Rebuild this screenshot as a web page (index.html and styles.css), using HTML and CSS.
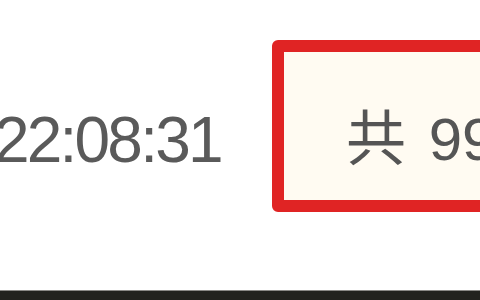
FILE: index.html
```html
<!DOCTYPE html>
<html lang="zh-CN">
<head>
<meta charset="utf-8">
<title>订单</title>
<link rel="stylesheet" href="styles.css">
</head>
<body>
<div class="page">
  <div class="main">
    <div class="time">22:08:31</div>
    <div class="total">共 99</div>
  </div>
  <div class="footer"></div>
</div>
</body>
</html>
```
FILE: styles.css
```css
html, body {
  margin: 0;
  padding: 0;
  background: #ffffff;
}
.page {
  width: 480px;
  height: 300px;
  display: flex;
  flex-direction: column;
  overflow: hidden;
}
.main {
  flex: 1;
  display: flex;
  align-items: flex-start;
  overflow: hidden;
}
.time {
  flex: none;
  width: 272px;
  margin-left: -6px;
  padding-top: 108px;
  font-family: "Liberation Sans", "Noto Sans CJK SC", sans-serif;
  font-size: 64px;
  line-height: 64px;
  letter-spacing: -2.8px;
  color: #5a5a5a;
  white-space: nowrap;
}
.total {
  flex: none;
  box-sizing: border-box;
  width: 260px;
  height: 172px;
  margin-top: 40px;
  margin-left: 6px;
  padding: 58px 0 0 62px;
  border: 12px solid #e02424;
  border-radius: 6px;
  background: #fffbf2;
  font-family: "Liberation Sans", "Noto Sans CJK SC", sans-serif;
  font-size: 60px;
  line-height: 60px;
  word-spacing: 6px;
  color: #555555;
  white-space: nowrap;
}
.footer {
  flex: none;
  height: 9px;
  border-top: 1px solid #8a8a86;
  background: #22231e;
}
```
